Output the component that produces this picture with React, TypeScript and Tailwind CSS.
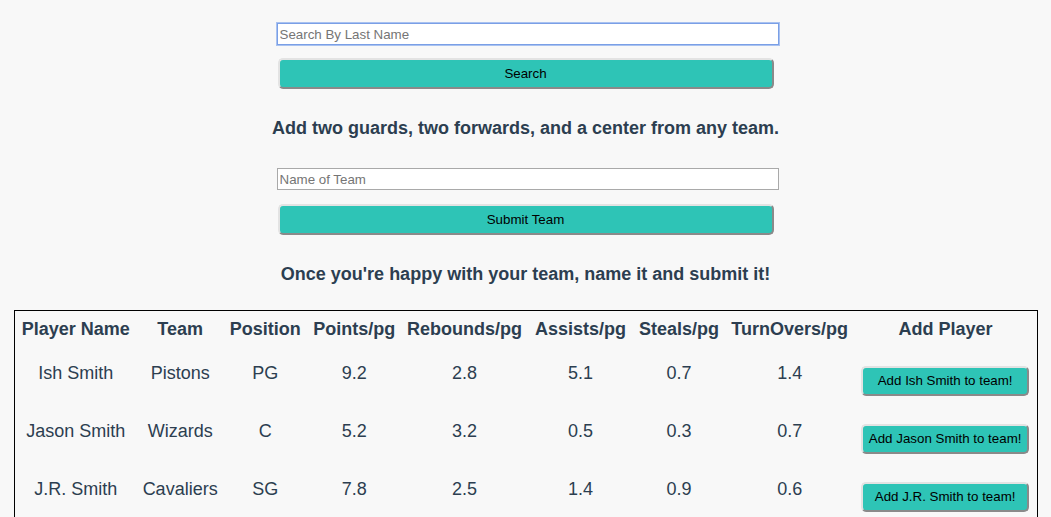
import React from "react";

type Player = {
  name: string;
  team: string;
  pos: string;
  pts: string;
  reb: string;
  ast: string;
  stl: string;
  tov: string;
};

const players: Player[] = [
  { name: "Ish Smith", team: "Pistons", pos: "PG", pts: "9.2", reb: "2.8", ast: "5.1", stl: "0.7", tov: "1.4" },
  { name: "Jason Smith", team: "Wizards", pos: "C", pts: "5.2", reb: "3.2", ast: "0.5", stl: "0.3", tov: "0.7" },
  { name: "J.R. Smith", team: "Cavaliers", pos: "SG", pts: "7.8", reb: "2.5", ast: "1.4", stl: "0.9", tov: "0.6" },
];

const headers = [
  "Player Name",
  "Team",
  "Position",
  "Points/pg",
  "Rebounds/pg",
  "Assists/pg",
  "Steals/pg",
  "TurnOvers/pg",
  "Add Player",
];

const btn =
  "bg-[#2ec4b6] text-black text-[13.33px] rounded-[5px] border-2 border-t-[#e3e3e3] border-l-[#e3e3e3] border-b-[#8a8a8a] border-r-[#8a8a8a]";

export default function App() {
  return (
    <div className="min-h-[517px] bg-[#f8f8f8] text-[#2c3e50] text-center font-['Liberation_Sans',Arial,sans-serif] pt-[23px] pb-4">
      {/* search */}
      <div className="flex flex-col items-center">
        <input
          placeholder="Search By Last Name"
          className="ml-1 w-[502px] h-[22px] px-[2px] bg-white text-[13.33px] border border-[#7a9fe6] outline outline-1 outline-[#a9c2f0] placeholder:text-[#757575]"
        />
        <button className={`${btn} mt-[13px] w-[496px] h-[31px]`}>Search</button>
        <h3 className="mt-[29px] text-[18px] leading-[21px] font-bold">
          Add two guards, two forwards, and a center from any team.
        </h3>

        {/* team name */}
        <input
          placeholder="Name of Team"
          className="ml-1 mt-[29px] w-[502px] h-[22px] px-[2px] bg-white text-[13.33px] border border-[#a9a9a9] placeholder:text-[#757575]"
        />
        <button className={`${btn} mt-[14px] w-[496px] h-[31px]`}>Submit Team</button>
        <h3 className="mt-[29px] text-[18px] leading-[21px] font-bold">
          Once you're happy with your team, name it and submit it!
        </h3>
      </div>

      {/* players */}
      <table className="mt-[25px] mx-auto w-[1024px] table-fixed border border-black border-collapse text-[18px]">
        <colgroup>
          <col className="w-[123px]" />
          <col className="w-[86px]" />
          <col className="w-[84px]" />
          <col className="w-[94px]" />
          <col className="w-[126px]" />
          <col className="w-[106px]" />
          <col className="w-[91px]" />
          <col className="w-[130px]" />
          <col className="w-[182px]" />
        </colgroup>
        <thead>
          <tr>
            {headers.map((h) => (
              <th key={h} className="h-[37px] pt-[8px] align-top font-bold leading-[21px] whitespace-nowrap">
                {h}
              </th>
            ))}
          </tr>
        </thead>
        <tbody>
          {players.map((p) => (
            <tr key={p.name}>
              {[p.name, p.team, p.pos, p.pts, p.reb, p.ast, p.stl, p.tov].map((v, i) => (
                <td key={i} className="h-[58px] pt-[15px] align-top leading-[21px] whitespace-nowrap">
                  {v}
                </td>
              ))}
              <td className="h-[58px] pt-[18px] pr-[1px] align-top">
                <button className={`${btn} w-[168px] h-[30px]`}>Add {p.name} to team!</button>
              </td>
            </tr>
          ))}
        </tbody>
      </table>
    </div>
  );
}
